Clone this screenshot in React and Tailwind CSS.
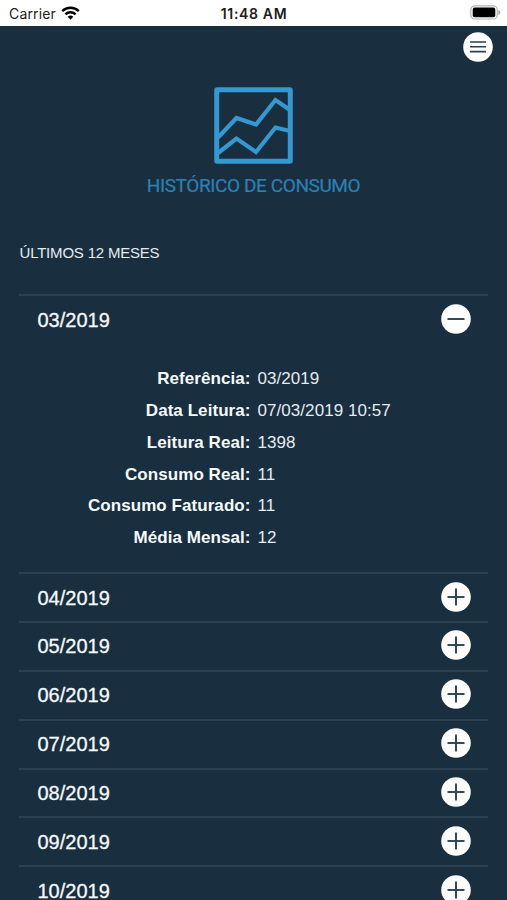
import * as Accordion from "@radix-ui/react-accordion";

const details = [
    { label: "Referência:", value: "03/2019" },
    { label: "Data Leitura:", value: "07/03/2019 10:57" },
    { label: "Leitura Real:", value: "1398" },
    { label: "Consumo Real:", value: "11" },
    { label: "Consumo Faturado:", value: "11" },
    { label: "Média Mensal:", value: "12" },
];

const months = ["04/2019", "05/2019", "06/2019", "07/2019", "08/2019", "09/2019", "10/2019"];

function StatusBar() {
    return (
        <header className="grid h-[25.5px] shrink-0 grid-cols-3 items-center bg-white pt-[2px] pr-[6px] pl-[9px] font-['Inter',sans-serif] text-[14px] leading-none text-[#1c1c1c]">
            <div className="flex items-center gap-[5px]">
                <span className="tracking-[0.15px]">Carrier</span>
                <svg className="mb-[2px] h-[14px] w-[19px]" viewBox="0 0 19 14" fill="none" stroke="#000" strokeWidth="2.4">
                    <path d="M1.2 5.1a11.8 11.8 0 0 1 16.6 0" />
                    <path d="M4.4 8.4a7.2 7.2 0 0 1 10.2 0" />
                    <path d="M9.5 13.7 6.7 10.8a4 4 0 0 1 5.6 0z" fill="#000" stroke="none" />
                </svg>
            </div>
            <span className="pr-[2px] text-center font-semibold tracking-[0.65px] whitespace-nowrap">11:48 AM</span>
            <svg className="mb-[2px] h-[15px] w-[31px] justify-self-end" viewBox="0 0 31 15">
                <rect x="0.8" y="0.8" width="26.4" height="13.2" rx="4" fill="#fff" stroke="#b5b5b5" strokeWidth="1.2" />
                <rect x="2.7" y="2.6" width="22.6" height="9.7" rx="2" fill="#000" />
                <path d="M28.3 5v5c1.2-.4 2-1.4 2-2.5s-.8-2.1-2-2.5z" fill="#a8a8a8" />
            </svg>
        </header>
    );
}

function RoundIcon({ name }) {
    return (
        <svg className="size-[30px] shrink-0" viewBox="0 0 30 30" fill="none" stroke="#2b4152" strokeWidth="1.9">
            <circle cx="15" cy="15" r="14.8" fill="#fff" stroke="none" />
            {name === "menu" && <path d="M7 10h16M7 14.8h16M7 19.6h16" strokeWidth="1.6" />}
            {name !== "menu" && <path d="M6.5 15h17" />}
            {name === "plus" && <path d="M15 6.5v17" />}
        </svg>
    );
}

function Month({ month, children }) {
    return (
        <Accordion.Item value={month} className="border-t-2 border-[#2c4252]">
            <Accordion.Header>
                <Accordion.Trigger className="group flex h-[46.83px] w-full items-center justify-between pr-[17.5px] pb-[2px] pl-[18.5px] text-[20px] leading-none text-[#f5fafd] data-[state=open]:pb-0">
                    <span className="pt-[2px] [-webkit-text-stroke:0.3px_#f5fafd]">{month}</span>
                    <span className="hidden group-data-[state=open]:block">
                        <RoundIcon name="minus" />
                    </span>
                    <span className="group-data-[state=open]:hidden">
                        <RoundIcon name="plus" />
                    </span>
                </Accordion.Trigger>
            </Accordion.Header>
            {children}
        </Accordion.Item>
    );
}

export default function App() {
    return (
        <div className="flex h-[900px] w-[507px] flex-col overflow-hidden bg-[#192f3f] font-['Liberation_Sans',sans-serif]">
            <StatusBar />
            <div className="flex h-[61.5px] shrink-0 items-start justify-end pt-[6px] pr-[14.5px]">
                <button aria-label="Menu">
                    <RoundIcon name="menu" />
                </button>
            </div>
            <section className="flex shrink-0 flex-col items-center">
                <svg className="h-[77px] w-[79px]" viewBox="0 0 79 77" fill="none" stroke="#3498d2">
                    <rect x="2.7" y="2.7" width="73.6" height="71.6" rx="0.5" strokeWidth="5" />
                    <path d="M4 50.5 22.5 31 42 37.5 61.5 13 76 23" strokeWidth="4.2" />
                    <path d="M4 66 22.5 51.5 42 65 61.5 40.5 76 44" strokeWidth="4.2" />
                </svg>
                <h1 className="mt-[10px] h-[24px] font-['Roboto',sans-serif] text-[19px] leading-[24px] tracking-[-0.4px] whitespace-nowrap text-[#2d80b3] [-webkit-text-stroke:0.2px_#2d80b3]">
                    HISTÓRICO DE CONSUMO
                </h1>
            </section>
            <h2 className="mt-[44.5px] ml-[19.5px] h-[20px] shrink-0 text-[15px] leading-[20px] tracking-[-0.2px] text-[#e3ebf0]">ÚLTIMOS 12 MESES</h2>
            <Accordion.Root type="single" defaultValue="03/2019" className="mx-[19px] mt-[31px] shrink-0">
                <Month month="03/2019">
                    <Accordion.Content className="h-[229.9px]">
                        <dl className="pt-[21px]">
                            {details.map(({ label, value }) => (
                                <div key={label} className="flex h-[31.75px] items-center gap-[7px] text-[17px]">
                                    <dt className="w-[231.5px] text-right font-bold tracking-[0.06px] text-[#f5fafd]">{label}</dt>
                                    <dd className="tracking-[0.06px] text-[#e3ebf0]">{value}</dd>
                                </div>
                            ))}
                        </dl>
                    </Accordion.Content>
                </Month>
                {months.map((month) => (
                    <Month key={month} month={month} />
                ))}
            </Accordion.Root>
        </div>
    );
}
